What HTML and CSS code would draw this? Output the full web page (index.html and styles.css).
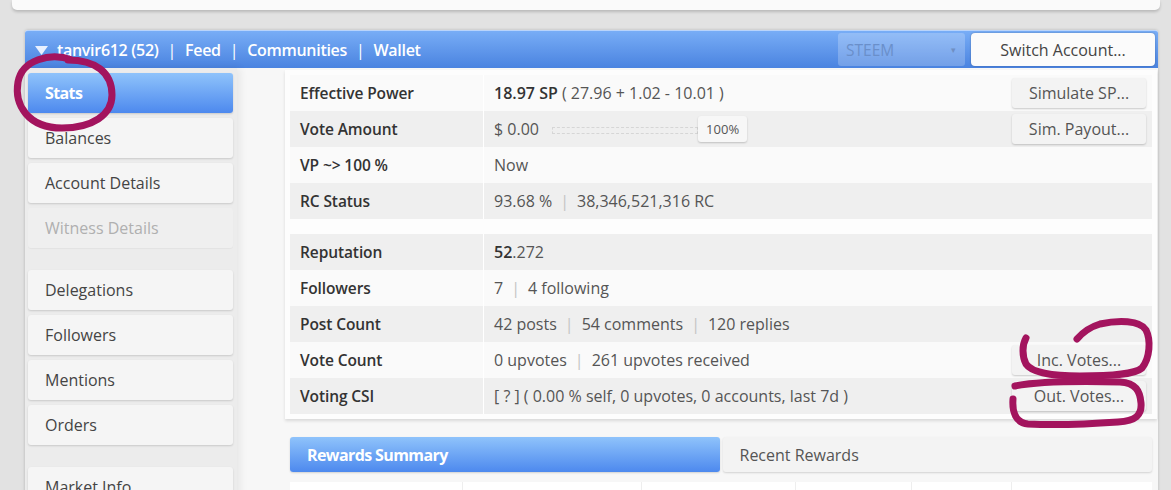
FILE: index.html
```html
<!DOCTYPE html>
<html>
<head>
<meta charset="utf-8">
<link rel="stylesheet" href="styles.css">
</head>
<body>
<div class="topcard"></div>
<div class="panel">
  <div class="bar">
    <div class="crumbs">
      <svg class="tri" width="13" height="9" viewBox="0 0 13 9"><polygon points="0,0 13,0 6.5,9" fill="#e8f0ff"/></svg>
      <span>tanvir612 (52)</span><span class="sep">|</span><span>Feed</span><span class="sep">|</span><span>Communities</span><span class="sep">|</span><span>Wallet</span>
    </div>
    <div class="select"><span>STEEM</span><span class="caret">▾</span></div>
    <div class="switch">Switch Account...</div>
  </div>
  <div class="main">
    <nav class="side">
      <div class="item active">Stats</div>
      <div class="item">Balances</div>
      <div class="item">Account Details</div>
      <div class="item disabled">Witness Details</div>
      <div class="spacer"></div>
      <div class="item">Delegations</div>
      <div class="item">Followers</div>
      <div class="item">Mentions</div>
      <div class="item">Orders</div>
      <div class="spacer"></div>
      <div class="item">Market Info</div>
    </nav>
    <section class="content">
      <div class="stats">
        <div class="row light">
          <div class="label">Effective Power</div>
          <div class="value"><b>18.97 SP</b>&nbsp;( 27.96 + 1.02 - 10.01 )</div>
          <div class="btn">Simulate SP...</div>
        </div>
        <div class="row dark">
          <div class="label">Vote Amount</div>
          <div class="value">$ 0.00 <span class="slider"></span><span class="pct">100%</span></div>
          <div class="btn">Sim. Payout...</div>
        </div>
        <div class="row light">
          <div class="label">VP ~&gt; 100 %</div>
          <div class="value">Now</div>
        </div>
        <div class="row dark">
          <div class="label">RC Status</div>
          <div class="value">93.68 %<span class="bar-sep">|</span>38,346,521,316 RC</div>
        </div>
        <div class="gap"></div>
        <div class="row dark">
          <div class="label">Reputation</div>
          <div class="value"><b>52</b>.272</div>
        </div>
        <div class="row light">
          <div class="label">Followers</div>
          <div class="value">7<span class="bar-sep">|</span>4 following</div>
        </div>
        <div class="row dark">
          <div class="label">Post Count</div>
          <div class="value">42 posts<span class="bar-sep">|</span>54 comments<span class="bar-sep">|</span>120 replies</div>
        </div>
        <div class="row light">
          <div class="label">Vote Count</div>
          <div class="value">0 upvotes<span class="bar-sep">|</span>261 upvotes received</div>
          <div class="btn">Inc. Votes...</div>
        </div>
        <div class="row dark">
          <div class="label">Voting CSI</div>
          <div class="value">[ ? ] ( 0.00 % self, 0 upvotes, 0 accounts, last 7d )</div>
          <div class="btn">Out. Votes...</div>
        </div>
      </div>
      <div class="tabs">
        <div class="tab active">Rewards Summary</div>
        <div class="tab">Recent Rewards</div>
      </div>
      <div class="rtable">
        <div class="cell c1"></div>
        <div class="cell c2"></div>
        <div class="cell c3"></div>
        <div class="cell c4"></div>
        <div class="cell c5"></div>
        <div class="cell c6"></div>
      </div>
    </section>
  </div>
</div>
<svg class="ink" width="1171" height="490" viewBox="0 0 1171 490">
  <path d="M72 60 C 50 52, 22 60, 18 82 C 14 105, 28 128, 62 128 C 92 128, 112 115, 112 95 C 112 72, 95 60, 68 60" />
  <path d="M1077 339 C 1083 332, 1090 327, 1100 324 C 1118 320, 1140 320, 1146 330 C 1151 340, 1150 358, 1142 368 C 1134 375, 1110 376, 1080 376 C 1052 376, 1032 373, 1026 364 C 1022 356, 1022 345, 1026 338" />
  <path d="M1015 386 C 1040 381, 1080 381, 1120 382 C 1136 383, 1140 391, 1141 403 C 1142 415, 1136 421, 1118 422 C 1090 424, 1050 425, 1028 424 C 1016 423, 1012 412, 1013 399" />
</svg>
</body>
</html>
```

FILE: styles.css
```css
* { box-sizing: border-box; }
html, body { margin: 0; padding: 0; }
body {
  background: #e2e2e2;
  font-family: "Open Sans", "Liberation Sans", sans-serif;
  color: #555;
  width: 1171px;
  height: 490px;
  overflow: hidden;
  position: relative;
}
.topcard {
  margin: 0 11px 0 12px;
  height: 10px;
  background: #fafafa;
  border-radius: 0 0 5px 5px;
  box-shadow: 0 2px 3px rgba(0,0,0,.18);
}
.panel {
  margin: 20px 13px 0 25px;
  height: 470px;
  background: #f7f7f7;
  box-shadow: 0 0 3px rgba(0,0,0,.2);
  border-radius: 3px 3px 0 0;
}
.bar {
  height: 38px;
  display: flex;
  align-items: center;
  background: linear-gradient(#78adf6, #4a83e0);
  border-radius: 3px 3px 0 0;
  border-top: 1px solid #b9d4fb;
  padding: 0 3px 0 10px;
}
.crumbs {
  flex: 1;
  display: flex;
  align-items: center;
  color: #fff;
  font-weight: 600;
  font-size: 16px;
  letter-spacing: -0.3px;
}
.tri { margin-right: 9px; margin-top: 1px; }
.sep { margin: 0 9px; font-weight: 400; }
.select {
  width: 127px;
  height: 33px;
  display: flex;
  align-items: center;
  justify-content: space-between;
  padding: 0 9px 0 8px;
  background: rgba(255,255,255,.22);
  border-radius: 3px;
  color: #6a8fca;
  font-size: 15.5px;
  margin-right: 6px;
}
.caret { font-size: 9px; color: #6f8fc3; }
.switch {
  width: 184px;
  height: 33px;
  background: #fbfbfb;
  border-radius: 4px;
  box-shadow: 0 0 2px rgba(0,0,0,.3);
  color: #444;
  font-size: 16px;
  display: flex;
  align-items: center;
  justify-content: center;
}
.main {
  display: flex;
  height: 432px;
}
.side {
  width: 212px;
  background: #ececec;
  padding: 5px 4px 0 3px;
  box-shadow: 3px 0 8px rgba(0,0,0,.07);
  display: flex;
  flex-direction: column;
  gap: 5px;
}
.item {
  height: 40px;
  flex: none;
  background: #f5f5f5;
  border-radius: 3px;
  box-shadow: 0 1px 2px rgba(0,0,0,.15);
  color: #444;
  font-size: 16px;
  display: flex;
  align-items: center;
  padding-left: 17px;
}
.item.active {
  background: linear-gradient(#8fc3fb, #4d89ee);
  color: #fff;
  font-weight: 700;
  letter-spacing: -0.6px;
}
.item.disabled {
  background: #efefef;
  color: #b0b0b0;
  box-shadow: 0 1px 1px rgba(0,0,0,.04);
}
.spacer { height: 12px; flex: none; }
.content {
  flex: 1;
  padding: 2px 1px 0 48px;
}
.stats {
  background: #fdfdfd;
  padding: 5px 5px;
  box-shadow: 0 2px 3px rgba(0,0,0,.12);
}
.row {
  height: 36px;
  display: flex;
  align-items: center;
  font-size: 16px;
}
.row.light { background: #fafafa; }
.row.dark { background: #efefef; }
.gap { height: 15px; background: #fdfdfd; }
.label {
  width: 194px;
  height: 100%;
  display: flex;
  align-items: center;
  padding-left: 10px;
  border-right: 1px solid #fff;
  color: #333;
  font-weight: 600;
  font-size: 15.5px;
  letter-spacing: -0.1px;
}
.value {
  flex: 1;
  padding-left: 10px;
  color: #555;
  display: flex;
  align-items: center;
  white-space: pre;
}
.value b { color: #333; font-weight: 600; }
.bar-sep { color: #c4c4c4; margin: 0 8px; }
.slider {
  width: 146px;
  height: 7px;
  border: 1px dashed #d6d6d6;
  margin-left: 9px;
  margin-top: 2px;
}
.pct {
  width: 49px;
  height: 26px;
  background: #f7f7f7;
  border-radius: 3px;
  box-shadow: 0 1px 2px rgba(0,0,0,.2);
  font-size: 13px;
  color: #555;
  display: flex;
  align-items: center;
  justify-content: center;
}
.btn {
  width: 134px;
  height: 30px;
  margin-right: 6px;
  background: #f3f3f3;
  border-radius: 3px;
  box-shadow: 0 1px 2px rgba(0,0,0,.2);
  color: #555;
  font-size: 16px;
  display: flex;
  align-items: center;
  justify-content: center;
}
.tabs {
  display: flex;
  gap: 3px;
  margin: 18px 5px 0 5px;
}
.tab {
  flex: 1;
  height: 35px;
  background: #f3f3f3;
  border-radius: 3px;
  box-shadow: 0 1px 2px rgba(0,0,0,.15);
  display: flex;
  align-items: center;
  padding-left: 17px;
  font-size: 16px;
  color: #555;
}
.tab.active {
  background: linear-gradient(#8fc3fb, #4d89ee);
  color: #fff;
  font-weight: 700;
  letter-spacing: -0.6px;
}
.rtable {
  display: flex;
  margin: 10px 5px 0 5px;
  height: 30px;
  background: #fff;
}
.cell { border-right: 1px solid #eee; height: 100%; }
.c1 { width: 173px; }
.c2 { width: 179px; }
.c3 { width: 154px; }
.c4 { width: 116px; }
.c5 { width: 100px; }
.c6 { flex: 1; border-right: none; }
.ink {
  position: absolute;
  left: 0;
  top: 0;
  pointer-events: none;
}
.ink path {
  fill: none;
  stroke: #a3145e;
  stroke-width: 7;
  stroke-linecap: round;
  stroke-linejoin: round;
}
```
